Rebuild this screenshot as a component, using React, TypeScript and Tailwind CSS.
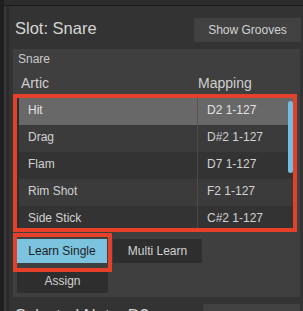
import React from "react";

const rows = [
  { artic: "Hit", map: "D2 1-127", sel: true },
  { artic: "Drag", map: "D#2 1-127" },
  { artic: "Flam", map: "D7 1-127" },
  { artic: "Rim Shot", map: "F2 1-127" },
  { artic: "Side Stick", map: "C#2 1-127" },
];

export default function App() {
  return (
    <div className="w-[303px] h-[311px] overflow-hidden bg-[#1e1e1e] flex font-['Liberation_Sans',Arial,sans-serif]">
      <div className="w-[4px] shrink-0 bg-[#1e1e1e]" />
      <div className="flex-1 flex flex-col min-w-0">
        <div className="h-[5px] shrink-0 bg-[#2c2c2c]" />
        <div className="h-[1px] shrink-0 bg-[#1a1a1a]" />
        <div className="flex-1 flex min-h-0">
          <div className="w-[2px] shrink-0 bg-[#3b3b3b]" />
          <div className="w-[3px] shrink-0 bg-[#2a2a2a]" />
          <div className="flex-1 bg-[#333333] flex flex-col min-w-0">
            {/* header */}
            <div className="flex justify-between items-start pt-[12px] pl-[6px] pr-[2px]">
              <div className="mt-[2px] text-[16.5px] leading-[16px] text-[#d6d6d6]">Slot: Snare</div>
              <div className="w-[107px] h-[24px] bg-[#414141] text-[12px] text-[#d2d2d2] flex items-center justify-center">
                Show Grooves
              </div>
            </div>
            {/* inner panel */}
            <div className="mt-[7px] ml-[4px] mr-[3px] bg-[#3f3f3f] flex flex-col">
              <div className="pl-[5px] pt-[2px] text-[12px] leading-[16px] text-[#cacaca]">Snare</div>
              <div className="mt-[6px] h-[20px] flex text-[14px] leading-[20px] text-[#d0d0d0]">
                <div className="w-[185px] pl-[8px]">Artic</div>
                <div>Mapping</div>
              </div>
              {/* table */}
              <div className="relative mt-[1px] h-[138px] w-[284px] bg-[#2d2d2d] pt-[4px] pl-[6px] pr-[4px] pb-[4px]">
                <div className="h-[130px] overflow-hidden flex flex-col">
                  {rows.map((r, i) => (
                    <div
                      key={r.artic}
                      className={
                        "h-[27px] shrink-0 flex text-[12px] " +
                        (r.sel ? "bg-[#686868] text-[#e2e2e2]" : i % 2 === 1 ? "bg-[#3b3b3b] text-[#d2d2d2]" : "bg-[#333333] text-[#d2d2d2]")
                      }
                    >
                      <div className="w-[178px] pl-[9px] pb-[4px] flex items-center">{r.artic}</div>
                      <div className={"flex-1 pl-[9px] pb-[4px] flex items-center border-l " + (r.sel ? "border-[#555555]" : "border-[#4a4a4a]")}>
                        {r.map}
                      </div>
                    </div>
                  ))}
                </div>
                <div className="absolute left-[275px] top-[7px] w-[5px] h-[72px] rounded-full bg-[#72bde0]" />
                <div className="absolute inset-0 border-[4px] border-[#e5402a]" />
              </div>
              {/* buttons */}
              <div className="relative mt-[1px] pl-[4px] pt-[6px] pb-[4px]">
                <div className="flex gap-[6px] text-[12px]">
                  <div className="w-[90px] h-[24px] bg-[#7bc3df] text-[#1e1e1e] flex items-center justify-center">
                    Learn Single
                  </div>
                  <div className="w-[89px] h-[24px] bg-[#2e2e2e] text-[#d2d2d2] flex items-center justify-center">
                    Multi Learn
                  </div>
                </div>
                <div className="mt-[8px] w-[91px] h-[22px] bg-[#2e2e2e] text-[12px] text-[#d2d2d2] flex items-center justify-center pb-[2px]">
                  Assign
                </div>
                <div className="absolute left-0 top-0 w-[99px] h-[39px] border-[4px] border-[#e5402a]" />
              </div>
            </div>
            {/* bottom row */}
            <div className="mt-[7px] flex justify-between items-start pl-[6px] pr-[3px]">
              <div className="mt-[3px] text-[16.5px] leading-[16px] text-[#d6d6d6]">Selected Note: D2</div>
              <div className="w-[97px] h-[24px] bg-[#414141] text-[13px] text-[#d2d2d2] flex items-center justify-center">
                Edit MIDI
              </div>
            </div>
          </div>
        </div>
      </div>
    </div>
  );
}
